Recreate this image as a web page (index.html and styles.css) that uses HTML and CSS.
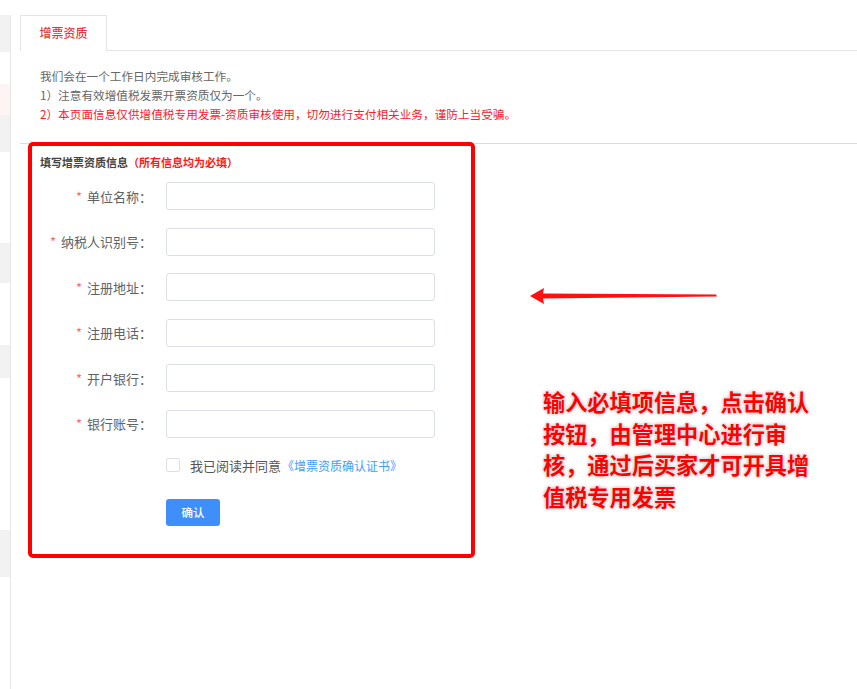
FILE: index.html
```html
<!DOCTYPE html>
<html>
<head>
    <title>增票资质</title>
    <link rel="stylesheet" href="styles.css">
</head>
<body>
    <div class="page">
        <div class="sidebar">
            <div class="side-block gray h37"></div>
            <div class="side-block h32"></div>
            <div class="side-block pink h31"></div>
            <div class="side-block gray h37"></div>
            <div class="side-block h91"></div>
            <div class="side-block gray h40"></div>
            <div class="side-block h62"></div>
            <div class="side-block gray h33"></div>
            <div class="side-block h152"></div>
            <div class="side-block gray h47"></div>
        </div>

        <div class="main">
            <div class="tabs">
                <div class="tab active">增票资质</div>
            </div>

            <div class="notice">
                <p>我们会在一个工作日内完成审核工作。</p>
                <p>1）注意有效增值税发票开票资质仅为一个。</p>
                <p class="warn">2）本页面信息仅供增值税专用发票-资质审核使用，切勿进行支付相关业务，谨防上当受骗。</p>
            </div>

            <div class="form-box">
                <div class="form-title">填写增票资质信息<span class="required-note">（所有信息均为必填）</span></div>

                <div class="form-row">
                    <label><span class="star">*</span>单位名称：</label>
                    <input type="text" class="field">
                </div>
                <div class="form-row">
                    <label><span class="star">*</span>纳税人识别号：</label>
                    <input type="text" class="field">
                </div>
                <div class="form-row">
                    <label><span class="star">*</span>注册地址：</label>
                    <input type="text" class="field">
                </div>
                <div class="form-row">
                    <label><span class="star">*</span>注册电话：</label>
                    <input type="text" class="field">
                </div>
                <div class="form-row">
                    <label><span class="star">*</span>开户银行：</label>
                    <input type="text" class="field">
                </div>
                <div class="form-row">
                    <label><span class="star">*</span>银行账号：</label>
                    <input type="text" class="field">
                </div>

                <div class="agree-row">
                    <span class="checkbox"></span>
                    <span class="agree-text">我已阅读并同意</span>
                    <a class="agree-link">《增票资质确认证书》</a>
                </div>

                <div class="button-row">
                    <button class="btn-confirm">确认</button>
                </div>
            </div>

            <!-- annotation overlay -->
            <svg class="arrow" width="190" height="20" viewBox="0 0 190 20">
                <polygon points="0,8 14,0 13,5.5 186,6.5 187,8.5 13,10.5 14,16" fill="#ff1010"/>
            </svg>
            <div class="callout">
                输入必填项信息，点击确认<br>
                按钮，由管理中心进行审<br>
                核，通过后买家才可开具增<br>
                值税专用发票
            </div>
        </div>
    </div>
</body>
</html>
```

FILE: styles.css
```css
* {
    box-sizing: border-box;
}
body {
    margin: 0;
    font-family: "Noto Sans CJK SC", "Noto Sans", sans-serif;
    background: #fff;
    color: #666;
}
p {
    margin: 0;
}
.page {
    display: flex;
    min-height: 689px;
}
.sidebar {
    width: 11px;
    margin-top: 15px;
    border-right: 1px solid #e6e6e6;
    flex-shrink: 0;
}
.side-block.gray { background: #f2f2f2; }
.side-block.pink { background: #fff4f4; }
.h31 { height: 31px; }
.h32 { height: 32px; }
.h33 { height: 33px; }
.h37 { height: 37px; }
.h40 { height: 40px; }
.h47 { height: 47px; }
.h62 { height: 62px; }
.h91 { height: 91px; }
.h152 { height: 152px; }

.main {
    flex: 1;
    padding-top: 15px;
    padding-left: 9px;
    position: relative;
}
.tabs {
    display: flex;
    height: 36px;
    border-bottom: 1px solid #e4e4e4;
}
.tab {
    width: 87px;
    height: 36px;
    border: 1px solid #e4e4e4;
    border-bottom: none;
    background: #fff;
    font-size: 12px;
    font-weight: 500;
    line-height: 34px;
    text-align: center;
    margin-bottom: -1px;
}
.tab.active {
    color: #e4393c;
}
.notice {
    padding: 15px 20px 20px;
    font-size: 11.65px;
    line-height: 19px;
    color: #666;
    border-bottom: 1px solid #dcdcdc;
}
.notice .warn {
    color: #f5222d;
}

.form-box {
    margin: -2px 0 0 8px;
    width: 447px;
    border: 4px solid #ff0000;
    border-radius: 5px;
    padding: 8px 8px 28px;
    position: relative;
    background: #fff;
}
.form-title {
    font-size: 11px;
    line-height: 16px;
    font-weight: bold;
    color: #444;
    margin-bottom: 12px;
}
.required-note {
    color: #ff1a1a;
}
.form-row {
    display: flex;
    align-items: center;
    height: 28px;
    margin-bottom: 17.5px;
}
.form-row label {
    width: 112px;
    margin-right: 14px;
    text-align: right;
    font-size: 13px;
    color: #606266;
}
.star {
    color: #f56c6c;
    margin-right: 5px;
}
.field {
    width: 269px;
    height: 28px;
    border: 1px solid #dcdfe6;
    border-radius: 3px;
    outline: none;
    padding: 0 8px;
}
.agree-row {
    display: flex;
    align-items: center;
    height: 20px;
    margin: 5.5px 0 0 126px;
}
.checkbox {
    width: 14px;
    height: 14px;
    border: 1px solid #dcdfe6;
    border-radius: 2px;
    margin-right: 10px;
}
.agree-text {
    font-size: 13px;
    color: #555;
}
.agree-link {
    font-size: 12px;
    color: #409eff;
    margin-left: 1px;
}
.button-row {
    margin: 23px 0 0 126px;
}
.btn-confirm {
    width: 54px;
    height: 27px;
    border: none;
    border-radius: 3px;
    background: #3f8ffb;
    color: #fff;
    font-family: inherit;
    font-size: 11.5px;
    font-weight: 500;
    padding: 0;
}

.arrow {
    position: absolute;
    left: 519px;
    top: 288px;
}
.callout {
    position: absolute;
    left: 532px;
    top: 386px;
    font-size: 22.2px;
    line-height: 31.5px;
    font-weight: bold;
    color: #ff0000;
    white-space: nowrap;
    text-shadow: 0 0 2px #fff, 0 0 3px #aaa, 0 0 4px #ccc;
}
```
